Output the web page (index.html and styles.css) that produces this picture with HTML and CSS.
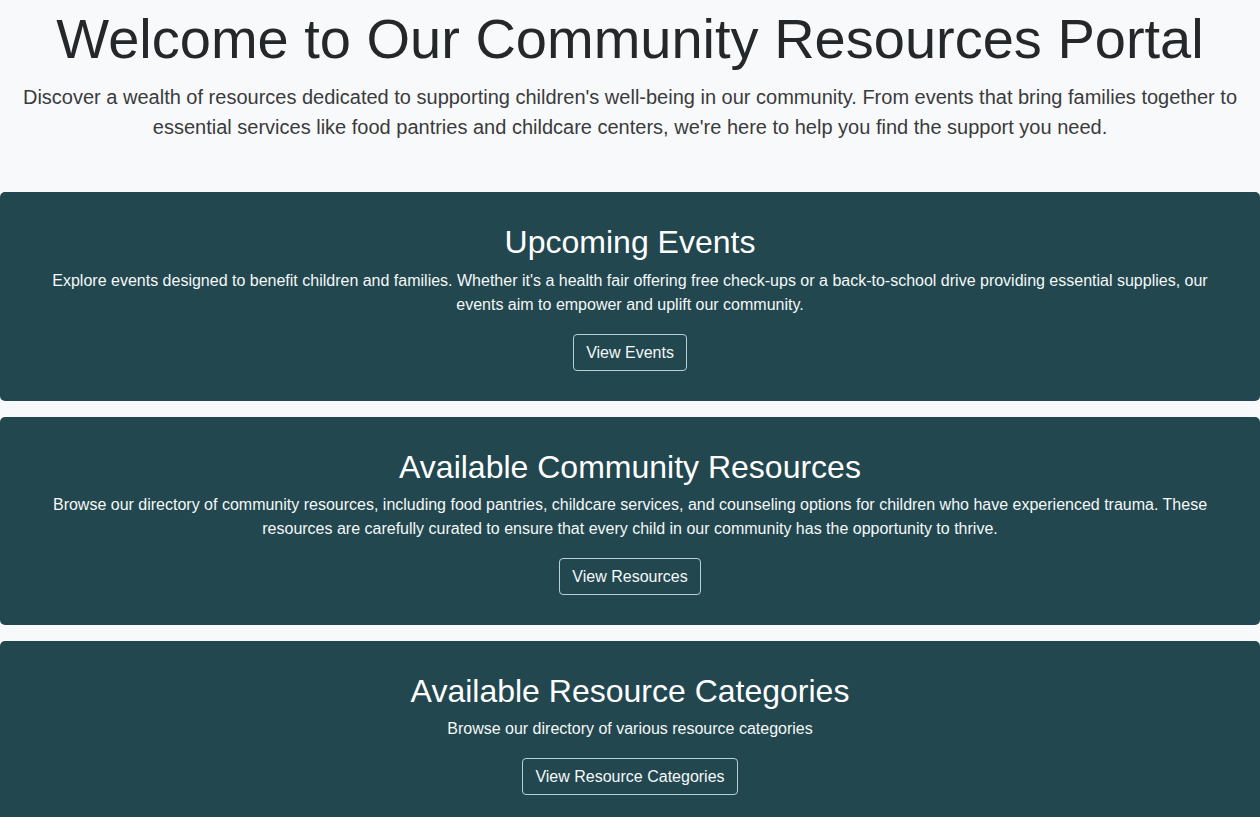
FILE: index.html
```html
<!DOCTYPE html>
<html lang="en">
<head>
<meta charset="utf-8">
<title>Community Resources Portal</title>
<link rel="stylesheet" href="styles.css">
</head>
<body>
<header class="intro">
  <h1 class="intro-title">Welcome to Our Community Resources Portal</h1>
  <p class="intro-text">Discover a wealth of resources dedicated to supporting children's well-being in our community. From events that bring families together to essential services like food pantries and childcare centers, we're here to help you find the support you need.</p>
</header>
<main class="cards">
  <section class="card">
    <h2 class="card-title">Upcoming Events</h2>
    <p class="card-text">Explore events designed to benefit children and families. Whether it's a health fair offering free check-ups or a back-to-school drive providing essential supplies, our events aim to empower and uplift our community.</p>
    <a class="card-btn" href="#">View Events</a>
  </section>
  <section class="card">
    <h2 class="card-title">Available Community Resources</h2>
    <p class="card-text">Browse our directory of community resources, including food pantries, childcare services, and counseling options for children who have experienced trauma. These resources are carefully curated to ensure that every child in our community has the opportunity to thrive.</p>
    <a class="card-btn" href="#">View Resources</a>
  </section>
  <section class="card">
    <h2 class="card-title">Available Resource Categories</h2>
    <p class="card-text">Browse our directory of various resource categories</p>
    <a class="card-btn" href="#">View Resource Categories</a>
  </section>
</main>
</body>
</html>
```

FILE: styles.css
```css
* { box-sizing: border-box; }
body {
  margin: 0;
  background: #f8f9fa;
  font-family: "Liberation Sans", Arial, sans-serif;
  color: #212529;
}
.intro {
  text-align: center;
  padding: 5px 16px 0;
}
.intro-title {
  margin: 0 0 10px;
  font-size: 56px;
  font-weight: 400;
  line-height: 1.2;
  color: #25282b;
}
.intro-text {
  margin: 0 0 50px;
  font-size: 20px;
  line-height: 30px;
  color: #3a3b3c;
}
.cards {
  display: flex;
  flex-direction: column;
  gap: 16px;
}
.card {
  background: #22474f;
  color: #fff;
  border-radius: 5px;
  text-align: center;
  padding: 31px 48px 30px;
  display: flex;
  flex-direction: column;
  align-items: center;
}
.card-title {
  margin: 0 0 7px;
  font-size: 32px;
  font-weight: 400;
  line-height: 1.2;
}
.card-text {
  margin: 0 0 17px;
  font-size: 16px;
  line-height: 24px;
  color: #f4f8f8;
}
.card-btn {
  display: inline-block;
  color: #f4f8f8;
  text-decoration: none;
  border: 1px solid #b8cfd3;
  border-radius: 4px;
  padding: 8px 12px;
  font-size: 16px;
  line-height: 19px;
}
```
